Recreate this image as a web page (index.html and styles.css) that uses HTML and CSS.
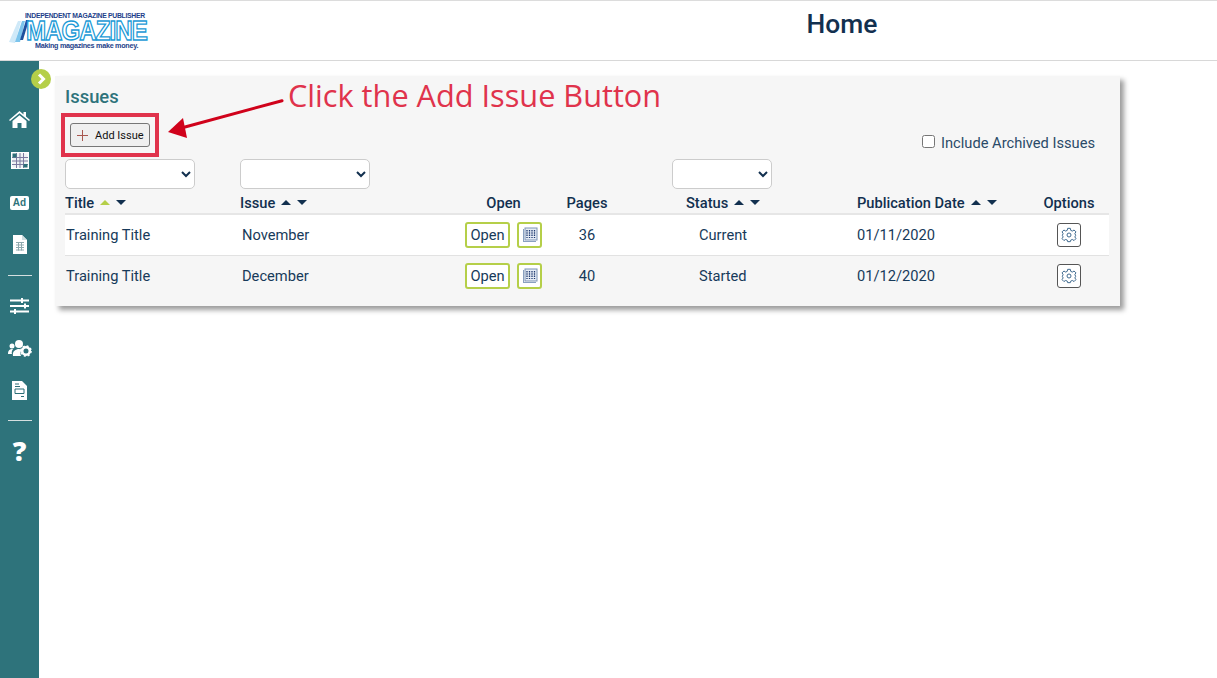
FILE: index.html
```html
<!DOCTYPE html>
<html lang="en">
<head>
<meta charset="utf-8">
<title>Home</title>
<link rel="stylesheet" href="styles.css">
</head>
<body>
<header class="topbar">
  <div class="logo">
    <svg class="logo-stripes" width="30" height="34" viewBox="0 0 30 34"><path d="M0 30 L9 9 H12 L6 31Z" fill="#cfe9f8"/><path d="M6 30 L13 9 H16 L11 30Z" fill="#7cc4ec"/><path d="M11 28 L17 8 H20 L14 28Z" fill="#1f4f9c"/></svg>
    <div class="logo-top">INDEPENDENT MAGAZINE PUBLISHER</div>
    <div class="logo-main">MAGAZINE</div>
    <div class="logo-sub">Making magazines make money.</div>
  </div>
  <h1 class="page-title">Home</h1>
</header>
<div class="shell">
  <nav class="sidebar">
    <svg class="nav-icon nav-home" width="21" height="17" viewBox="0 0 21 17"><path d="M10.500 0 L14.500 3.400V1H17V5.500L21 8.900 20 10 10.500 2.200 1 10 0 8.900Z" fill="#fff"/><path d="M3.500 10 L10.500 4.200 17.500 10V17H12.500V12H8.500V17H3.500Z" fill="#fff"/></svg>
    <svg class="nav-icon nav-grid" width="18" height="17" viewBox="0 0 18 17"><rect width="18" height="17" fill="#fff"/><path d="M1.500 1.500H16.500V15.500H1.500Z" fill="#eef2f3"/><path d="M1 5.500H17M1 9H17M1 12.500H17M5.500 1V16M9 1V16M12.500 1V16" stroke="#7d7aa0" stroke-width="1"/><rect x="1.500" y="1.500" width="4" height="4" fill="#2d6f78"/><rect x="12.500" y="12" width="4" height="3.500" fill="#2d6f78"/></svg>
    <div class="ad-icon">Ad</div>
    <svg class="nav-icon nav-doc" width="14" height="19" viewBox="0 0 14 19"><path d="M0 0H9L14 5V19H0Z" fill="#fff"/><path d="M9 0V5H14" fill="#cfdde0"/><path d="M3 7.500H11M3 10H11M3 12.500H11M3 15H11M5.500 7V15.500M8.500 7V15.500" stroke="#8fa9ae" stroke-width="1"/></svg>
    <hr class="nav-rule">
    <svg class="nav-icon nav-sliders" width="19" height="16" viewBox="0 0 19 16"><path d="M0 1.500H19V3.500H0ZM0 7H19V9H0ZM0 12.500H19V14.500H0Z" fill="#fff"/><path d="M11 0H13V5H11ZM14 5.500H16V10.500H14ZM4 11H6V16H4Z" fill="#fff"/></svg>
    <svg class="nav-icon nav-people" width="24" height="17" viewBox="0 0 24 17"><circle cx="11" cy="4" r="4" fill="#fff"/><circle cx="4" cy="6" r="2.500" fill="#fff"/><path d="M0 14C0 10 2 9 5 9 3.500 11 3.500 13 4 14ZM5 16C4 11 8 9 11 9 13 9 14 10 14 10 12 12 12 14 13 16Z" fill="#fff"/><circle cx="18" cy="11" r="3.800" fill="none" stroke="#fff" stroke-width="2.600"/><circle cx="18" cy="11" r="5" fill="none" stroke="#fff" stroke-width="1.600" stroke-dasharray="2 1.930"/></svg>
    <svg class="nav-icon nav-form" width="15" height="19" viewBox="0 0 15 19"><path d="M0 0H10L15 5V19H0Z" fill="#fff"/><path d="M3 8H12V12.500H3Z" fill="#fff" stroke="#2d6f78"/><path d="M3 3H7M3 5.500H8M9 15.500H12" stroke="#2d6f78" stroke-width="1"/></svg>
    <hr class="nav-rule nav-rule-last">
    <div class="help-icon">?</div>
  </nav>
  <div class="toggle">
    <svg width="20" height="20" viewBox="0 0 20 20"><circle cx="10" cy="10" r="10" fill="#b5cf49"/><path d="M8 5.500 L12.500 10 8 14.500" fill="none" stroke="#fff" stroke-width="3"/></svg>
  </div>
  <main class="content">
    <section class="panel">
      <h2 class="panel-title">Issues</h2>
      <div class="toolbar">
        <button class="add-btn"><svg width="11" height="11" viewBox="0 0 11 11"><path d="M5.500 0V11M0 5.500H11" stroke="#a8574f" stroke-width="1"/></svg><span>Add Issue</span></button>
        <label class="archive"><input type="checkbox" class="archive-check"><span>Include Archived Issues</span></label>
      </div>
      <div class="grid filters">
        <select class="filter"></select>
        <select class="filter"></select>
        <span></span><span></span>
        <select class="filter filter-status"></select>
      </div>
      <div class="grid head">
        <div class="cell"><span>Title</span><i class="up on"></i><i class="down"></i></div>
        <div class="cell"><span>Issue</span><i class="up"></i><i class="down"></i></div>
        <div class="center">Open</div>
        <div class="center">Pages</div>
        <div class="cell status-head"><span>Status</span><i class="up"></i><i class="down"></i></div>
        <div class="cell"><span>Publication Date</span><i class="up"></i><i class="down"></i></div>
        <div class="center">Options</div>
      </div>
      <div class="grid row white">
        <div class="title-cell">Training Title</div>
        <div class="issue">November</div>
        <div class="open-cell"><button class="open-btn">Open</button><button class="plan-btn"><svg width="16" height="16" viewBox="0 0 16 16"><path d="M1 2V15H14V14H2V2Z" fill="#8aa0c0"/><rect x="3" y="1" width="12" height="12" fill="#e6ecf6" stroke="#7d93b5"/><path d="M5 3V11M7.500 3V11M10 3V11M12.500 3V11" stroke="#1f3a70" stroke-width="1.300" stroke-dasharray="1.500 .8"/></svg></button></div>
        <div class="pages">36</div>
        <div class="status">Current</div>
        <div>01/11/2020</div>
        <div class="options"><button class="gear-btn"><svg width="16" height="16" viewBox="0 0 24 24" fill="none" stroke="#3f6a8f" stroke-width="1.500"><circle cx="12" cy="12" r="3"/><path d="M10 2h4l.6 3 2.400 1.100 2.600-1.600 2.800 2.800-1.600 2.600L22 12.400v.100l-1.200 2.400 1.600 2.600-2.800 2.800-2.600-1.600-2.400 1L14 22h-4l-.6-2.300-2.400-1-2.600 1.600-2.800-2.800 1.600-2.600L2 12.500v-.100L3.200 10 1.600 7.300l2.800-2.800L7 6.100 9.400 5z"/></svg></button></div>
      </div>
      <div class="grid row">
        <div class="title-cell">Training Title</div>
        <div class="issue">December</div>
        <div class="open-cell"><button class="open-btn">Open</button><button class="plan-btn"><svg width="16" height="16" viewBox="0 0 16 16"><path d="M1 2V15H14V14H2V2Z" fill="#8aa0c0"/><rect x="3" y="1" width="12" height="12" fill="#e6ecf6" stroke="#7d93b5"/><path d="M5 3V11M7.500 3V11M10 3V11M12.500 3V11" stroke="#1f3a70" stroke-width="1.300" stroke-dasharray="1.500 .8"/></svg></button></div>
        <div class="pages">40</div>
        <div class="status">Started</div>
        <div>01/12/2020</div>
        <div class="options"><button class="gear-btn"><svg width="16" height="16" viewBox="0 0 24 24" fill="none" stroke="#3f6a8f" stroke-width="1.500"><circle cx="12" cy="12" r="3"/><path d="M10 2h4l.6 3 2.400 1.100 2.600-1.600 2.800 2.800-1.600 2.600L22 12.400v.100l-1.200 2.400 1.600 2.600-2.800 2.800-2.600-1.600-2.400 1L14 22h-4l-.6-2.300-2.400-1-2.600 1.600-2.800-2.800 1.600-2.600L2 12.500v-.100L3.200 10 1.600 7.300l2.800-2.800L7 6.100 9.400 5z"/></svg></button></div>
      </div>
    </section>
  </main>
</div>
<div class="callout-box"></div>
<svg class="callout-arrow" width="120" height="45" viewBox="0 0 120 45"><path d="M114 3.700 L17 30" stroke="#d0021b" stroke-width="3" stroke-linecap="round"/><path d="M0 35 L15 21 L19 41Z" fill="#d0021b"/></svg>
<div class="callout-text">Click the Add Issue Button</div>
</body>
</html>
```
FILE: styles.css
```css
* { box-sizing: border-box; }
html, body { margin: 0; padding: 0; height: 678px; overflow: hidden; background: #fff; }
body { font-family: Roboto, "Liberation Sans", sans-serif; color: #0e2f4f; position: relative; }
button { font-family: inherit; padding: 0; cursor: pointer; }

.topbar { height: 61px; border-top: 1px solid #dcdcdc; border-bottom: 1px solid #d8d8d8; position: relative; display: flex; justify-content: center; }
.page-title { margin: 8px 0 0 467px; font-size: 26.400px; line-height: 30px; font-weight: 500; color: #12304f; }
.logo { position: absolute; left: 8px; top: 11px; width: 142px; height: 40px; }
.logo-stripes { position: absolute; left: 1px; top: 0; }
.logo-top { position: absolute; left: 17px; top: 0; font: 700 8px/8px "Liberation Sans", sans-serif; letter-spacing: -.32px; color: #1e3f8a; white-space: nowrap; transform: scaleX(.85); transform-origin: left; }
.logo-main { position: absolute; left: 18px; top: 8px; font: 700 28px/22px "Liberation Sans", sans-serif; letter-spacing: -1.100px; color: #fff; -webkit-text-stroke: 1.400px #1a9ad6; white-space: nowrap; transform: scaleX(.86); transform-origin: left; }
.logo-sub { position: absolute; left: 27px; top: 30px; font: 700 8px/8px "Liberation Sans", sans-serif; letter-spacing: -.3px; color: #1e3f8a; white-space: nowrap; transform: scaleX(.9); transform-origin: left; }

.shell { display: flex; height: 617px; position: relative; }
.sidebar { width: 39px; background: #2e737b; display: flex; flex-direction: column; align-items: center; padding-top: 50px; flex: none; }
.nav-icon { display: block; flex: none; }
.nav-home { margin-bottom: 24px; }
.nav-grid { margin-bottom: 27px; }
.nav-doc { margin-top: 25px; }
.nav-sliders { margin-bottom: 26px; }
.nav-people { margin-bottom: 24px; }
.ad-icon { width: 19px; height: 14px; background: #fff; border-radius: 2px; color: #2e737b; font: 700 10px/14px "Liberation Sans", sans-serif; text-align: center; flex: none; }
.nav-rule { width: 24px; height: 1px; border: 0; background: #d5dfe0; margin: 21px 0 22px; flex: none; }
.nav-rule-last { margin: 20px 0 0; }
.help-icon { color: #fff; font: 800 27px/27px "Open Sans", sans-serif; margin-top: 16px; }
.toggle { position: absolute; left: 31px; top: 8px; width: 20px; height: 20px; }
.toggle svg { display: block; }

.content { flex: 1; padding: 15px 0 0 16px; }
.panel { width: 1065px; height: 230px; background: #f6f6f6; box-shadow: 4px 4px 5px #9c9c9c; padding: 10px 11px 0 10px; }
.panel-title { margin: 0; font-size: 18.400px; line-height: 22px; font-weight: 500; color: #2e737b; }
.toolbar { height: 51px; position: relative; }
.add-btn { position: absolute; left: 5px; top: 15px; width: 80px; height: 24px; background: #efefef; border: 1px solid #767676; border-radius: 3px; display: flex; align-items: center; gap: 7px; padding-left: 6px; font-size: 11px; color: #111; }
.add-btn svg { display: block; }
.archive { position: absolute; right: 14px; top: 26px; display: flex; align-items: center; gap: 6px; font-size: 14.670px; line-height: 18px; color: #2a4a68; }
.archive-check { margin: -3px 0 0; width: 13px; height: 13px; }

.grid { display: grid; grid-template-columns: 175px 224px 79px 88px 226px 172px 80px; }
.filters { height: 30px; }
.filter { width: 130px; height: 30px; background: #fff; border: 1px solid #ccc; border-radius: 5px; margin: 0; color: #12304f; }
.filter-status { width: 100px; margin-left: 41px; }
.head { height: 26px; align-items: center; font-size: 14.670px; font-weight: 500; padding-top: 3px; border-bottom: 2px solid #e6e6e6; color: #12304f; }
.cell { display: flex; align-items: center; }
.cell i { width: 0; height: 0; border-left: 5px solid transparent; border-right: 5px solid transparent; display: block; margin-left: 6px; }
.up { border-bottom: 5px solid #12304f; }
.up.on { border-bottom-color: #b5cf49; }
.down { border-top: 5px solid #12304f; }
.center { text-align: center; white-space: nowrap; }
.status-head { padding-left: 55px; }

.row { height: 41px; align-items: center; font-size: 14.670px; border-bottom: 1px solid #e2e2e2; color: #173a5a; }
.row:last-child { border-bottom: 0; height: 40px; }
.row.white { background: #fff; }
.title-cell { padding-left: 1px; }
.issue { padding-left: 2px; }
.open-cell { display: flex; align-items: center; gap: 7px; padding-left: 1px; }
.open-btn { width: 45px; height: 26px; flex: none; background: #fff; border: 2px solid #b5cf49; border-radius: 3px; font-size: 14.670px; color: #173a5a; }
.plan-btn { width: 25px; height: 26px; flex: none; background: #fff; border: 2px solid #b5cf49; border-radius: 3px; display: flex; align-items: center; justify-content: center; }
.plan-btn svg, .gear-btn svg { display: block; }
.pages { text-align: center; }
.status { padding-left: 68px; }
.options { display: flex; justify-content: center; }
.gear-btn { width: 24px; height: 24px; background: #fff; border: 1px solid #555; border-radius: 3px; display: flex; align-items: center; justify-content: center; }

.callout-box { position: absolute; left: 61px; top: 113px; width: 98px; height: 44px; border: 4px solid #e0334c; }
.callout-arrow { position: absolute; left: 168px; top: 97px; }
.callout-text { position: absolute; left: 288px; top: 74px; font: 400 30.700px/42px "Open Sans", sans-serif; color: #e0334c; white-space: nowrap; }
```
